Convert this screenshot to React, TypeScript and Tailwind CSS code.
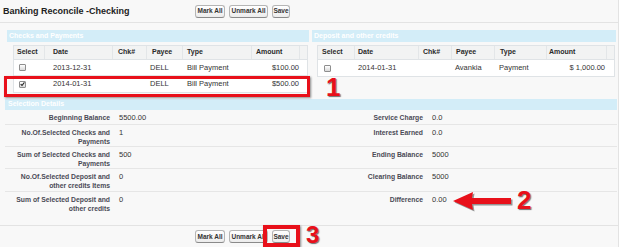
import React from "react";

type Col = { w: string; hp: string; bp: string };

const leftCols: Col[] = [
  { w: "w-[31px]", hp: "pl-[3px]", bp: "pl-[5px]" },
  { w: "w-[68px]", hp: "pl-[8px]", bp: "pl-[8px]" },
  { w: "w-[34px]", hp: "pl-[5px]", bp: "pl-[5px]" },
  { w: "w-[36px]", hp: "pl-[5px]", bp: "pl-[3px]" },
  { w: "w-[69px]", hp: "pl-[4px]", bp: "pl-[4px]" },
  { w: "w-[48px]", hp: "pl-[4px]", bp: "pr-[1px] justify-end" },
];

const rightCols: Col[] = [
  { w: "w-[37px]", hp: "pl-[4px]", bp: "pl-[6px]" },
  { w: "w-[64px]", hp: "pl-[3px]", bp: "pl-[3px]" },
  { w: "w-[33px]", hp: "pl-[4px]", bp: "pl-[4px]" },
  { w: "w-[43px]", hp: "pl-[4px]", bp: "pl-[3px]" },
  { w: "w-[52px]", hp: "pl-[5px]", bp: "pl-[4px]" },
  { w: "w-[60px]", hp: "pl-[2px]", bp: "pr-[2px] justify-end" },
];

const headers = ["Select", "Date", "Chk#", "Payee", "Type", "Amount"];

const checks = [
  { checked: false, date: "2013-12-31", chk: "", payee: "DELL", type: "Bill Payment", amount: "$100.00" },
  { checked: true, date: "2014-01-31", chk: "", payee: "DELL", type: "Bill Payment", amount: "$500.00" },
];

const deposits = [
  { checked: false, date: "2014-01-31", chk: "", payee: "Avankia", type: "Payment", amount: "$ 1,000.00" },
];

const details = [
  { h: "h-[15px]", l1: ["Beginning Balance"], v1: "5500.00", l2: ["Service Charge"], v2: "0.0" },
  { h: "h-[22px]", l1: ["No.Of.Selected Checks and", "Payments"], v1: "1", l2: ["Interest Earned"], v2: "0.0" },
  { h: "h-[22px]", l1: ["Sum of Selected Checks and", "Payments"], v1: "500", l2: ["Ending Balance"], v2: "5000" },
  { h: "h-[23px]", l1: ["No.Of.Selected Deposit and", "other credits Items"], v1: "0", l2: ["Clearing Balance"], v2: "5000" },
  { h: "h-[33px] border-b-0", l1: ["Sum of Selected Deposit and", "other credits"], v1: "0", l2: ["Difference"], v2: "0.00" },
];

function CheckBox({ checked }: { checked: boolean }) {
  return (
    <span className="flex h-[7px] w-[7px] items-center justify-center rounded-[1px] border border-[#8e8e8e] bg-linear-to-b from-white to-[#d9d9d9]">
      {checked && (
        <svg width="6" height="6" viewBox="0 0 6 6">
          <path d="M0.8 3.2 L2.4 4.8 L5.3 1" fill="none" stroke="#222" strokeWidth="1.3" />
        </svg>
      )}
    </span>
  );
}

function Buttons() {
  const btn =
    "flex h-[13px] items-center justify-center whitespace-nowrap rounded-[3px] border border-[#b5b5b5] border-b-[#8a8a8a] bg-linear-to-b from-white to-[#ececec] text-[6.5px] font-bold text-[#333]";
  return (
    <div className="flex gap-[4px]">
      <span className={`${btn} w-[30px]`}>Mark All</span>
      <span className={`${btn} w-[39px]`}>Unmark All</span>
      <span className={`${btn} w-[18px]`}>Save</span>
    </div>
  );
}

function DataTable({ cols, rows, width }: { cols: Col[]; rows: typeof checks; width: string }) {
  return (
    <div className={`${width} border border-[#dfe3e6] bg-white`}>
      <div className="flex h-[14px] border-b border-[#dfe3e6] bg-[#f2f3f3] text-[7px] font-bold text-[#2a2a2a]">
        {cols.map((c, i) => (
          <div key={i} className={`${c.w} ${c.hp} flex items-center border-r border-[#e3e6e8]`}>
            {headers[i]}
          </div>
        ))}
        <div className="flex-1" />
      </div>
      {rows.map((r, ri) => (
        <div key={ri} className="flex h-4 border-b border-[#ececec] text-[7.5px] text-[#333] last:border-b-0">
          <div className={`${cols[0].w} ${cols[0].bp} flex items-center`}>
            <CheckBox checked={r.checked} />
          </div>
          <div className={`${cols[1].w} ${cols[1].bp} flex items-center`}>{r.date}</div>
          <div className={`${cols[2].w} ${cols[2].bp} flex items-center`}>{r.chk}</div>
          <div className={`${cols[3].w} ${cols[3].bp} flex items-center`}>{r.payee}</div>
          <div className={`${cols[4].w} ${cols[4].bp} flex items-center`}>{r.type}</div>
          <div className={`${cols[5].w} ${cols[5].bp} flex items-center`}>{r.amount}</div>
        </div>
      ))}
    </div>
  );
}

function Band({ title, width }: { title: string; width: string }) {
  return (
    <div className={`${width} flex h-[12px] items-center bg-[#d3edf8] px-[2px] text-[7px] font-bold text-white`}>
      {title}
    </div>
  );
}

export default function App() {
  const num =
    "absolute font-bold leading-none text-[#e8101a] [text-shadow:1px_1px_1px_rgba(0,0,0,0.55)]";

  return (
    <div className="relative h-[247px] w-[624px] overflow-hidden bg-white font-['Liberation_Sans',Arial,sans-serif] text-[#333]">
      <div className="flex h-full w-[619px] flex-col border-r border-[#e3e3e3] bg-[#f8f8f8]">
        {/* Title bar */}
        <div className="flex h-[23px] shrink-0 items-center border-b border-[#e3e3e3]">
          <h2 className="w-[195px] pl-[3px] text-[9px] font-bold leading-none text-[#222]">
            Banking Reconcile -Checking
          </h2>
          <Buttons />
        </div>

        {/* Checks / Deposits */}
        <div className="flex gap-[3px] pl-[7px] pt-[7px]">
          <div>
            <Band title="Checks and Payments" width="w-[302px]" />
            <div className="mt-[3px] pl-[6px]">
              <DataTable cols={leftCols} rows={checks} width="w-[295px]" />
            </div>
          </div>
          <div>
            <Band title="Deposit and other credits" width="w-[304px]" />
            <div className="mt-[3px] pl-[5px]">
              <DataTable cols={rightCols} rows={deposits} width="w-[298px]" />
            </div>
          </div>
        </div>

        {/* Selection details */}
        <div className="ml-[5px] mt-[6px] w-[612px]">
          <div className="flex h-[11px] items-center bg-[#d3edf8] px-[3px] text-[7px] font-bold text-white">
            Selection Details
          </div>
          {details.map((d, i) => (
            <div key={i} className={`${d.h} flex border-b border-[#e6e6e6] pt-[3px] leading-[9px]`}>
              <div className="w-[110px] whitespace-nowrap pr-[5px] text-right text-[6.8px] font-bold text-[#4a4a56]">
                {d.l1.map((t, j) => (
                  <div key={j}>{t}</div>
                ))}
              </div>
              <div className="w-[197px] pl-[4px] text-[7.5px] text-[#333]">{d.v1}</div>
              <div className="w-[116px] whitespace-nowrap pr-[5px] text-right text-[6.8px] font-bold text-[#4a4a56]">
                {d.l2.map((t, j) => (
                  <div key={j}>{t}</div>
                ))}
              </div>
              <div className="flex-1 pl-[4px] text-[7.5px] text-[#333]">{d.v2}</div>
            </div>
          ))}
        </div>

        {/* Bottom buttons */}
        <div className="flex-1 border-t border-[#e3e3e3] pl-[195px] pt-[4px]">
          <Buttons />
        </div>
      </div>

      {/* Annotations */}
      <div className="absolute left-[4px] top-[76px] h-[21px] w-[306px] border-[3px] border-[#e8101a] shadow-[1px_1px_2px_rgba(0,0,0,0.45)]" />
      <span className={`${num} left-[326px] top-[74px] text-[26px]`}>1</span>

      <svg className="absolute left-[450px] top-[190px]" width="66" height="24" viewBox="0 0 66 24">
        <path d="M4.5 12.5 L24.5 3.5 L23.5 9.5 L62.5 9.5 L62.5 15.5 L23.5 15.5 L24.5 21.5 Z" fill="rgba(0,0,0,0.4)" />
        <path d="M3 11 L23 2 L22 8 L61 8 L61 14 L22 14 L23 20 Z" fill="#e8101a" />
      </svg>
      <span className={`${num} left-[517px] top-[187px] text-[26px]`}>2</span>

      <div className="absolute left-[263px] top-[225px] h-[22px] w-[37px] border-[4px] border-[#e8101a] shadow-[1px_1px_2px_rgba(0,0,0,0.45)]" />
      <span className={`${num} left-[306px] top-[223px] text-[24px]`}>3</span>
    </div>
  );
}
